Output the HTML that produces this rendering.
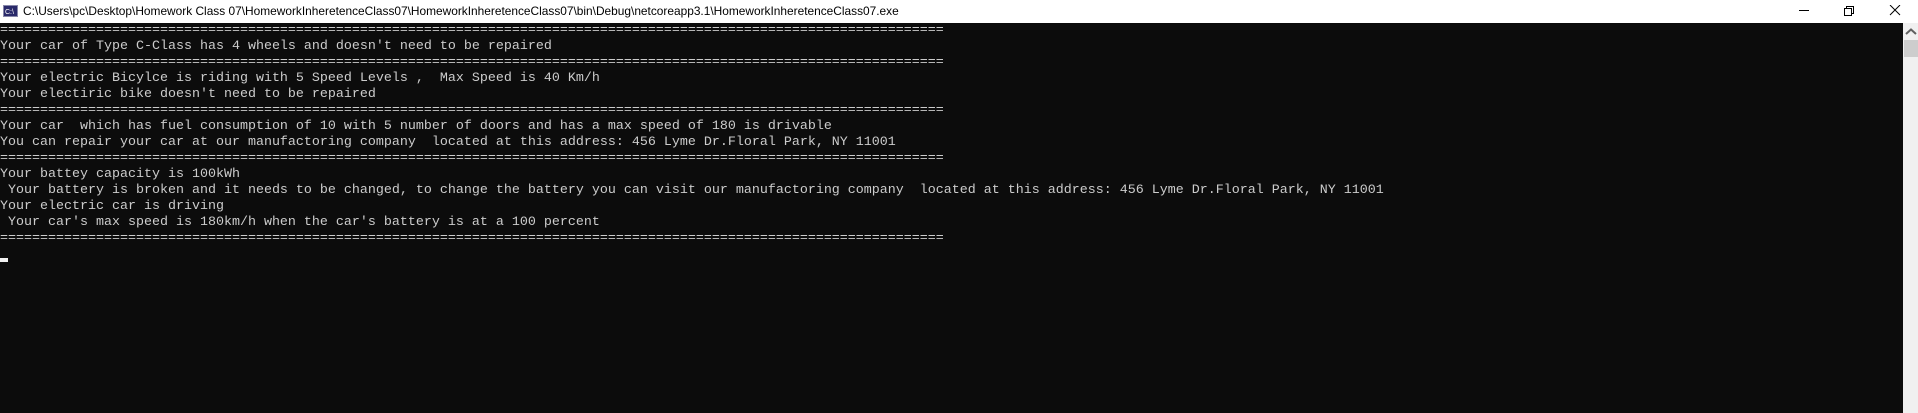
<!DOCTYPE html>
<html><head><style>
body{margin:0;width:1918px;height:413px;overflow:hidden;background:#0c0c0c;position:relative}
#tb{position:absolute;left:0;top:0;width:1918px;height:23px;background:#fff}
#title{position:absolute;left:23px;top:4px;font:11.9px "Liberation Sans",sans-serif;color:#000;white-space:nowrap}
#con{position:absolute;left:0;top:23px;margin:0;font:13.33px/16px "Liberation Mono",monospace;color:#cccccc;white-space:pre}
#sb{position:absolute;left:1903px;top:23px;width:15px;height:390px;background:#f0f0f0}
#th{position:absolute;left:1904px;top:40px;width:14px;height:17px;background:#cdcdcd}
#cur{position:absolute;left:0;top:258px;width:8px;height:4px;background:#f2f2f2}
</style></head><body>
<div id="tb">
<svg style="position:absolute;left:3px;top:5px" width="15" height="12"><rect x="0.5" y="0.5" width="14" height="11" fill="#2a2a6a" stroke="#8888aa"/><text x="2" y="9" font-size="7" fill="#fff" font-family="Liberation Sans">C:\</text></svg>
<div id="title">C:\Users\pc\Desktop\Homework Class 07\HomeworkInheretenceClass07\HomeworkInheretenceClass07\bin\Debug\netcoreapp3.1\HomeworkInheretenceClass07.exe</div>
<svg style="position:absolute;left:1795px;top:5px" width="120" height="14">
<line x1="4" y1="5.5" x2="14" y2="5.5" stroke="#000"/>
<rect x="49.5" y="3.5" width="7" height="7" fill="none" stroke="#000"/><path d="M51.5 3.5V1.5H58.5V8.5H56.5" fill="none" stroke="#000"/>
<path d="M95 0L105 10M105 0L95 10" stroke="#000"/>
</svg>
</div>
<pre id="con">======================================================================================================================
Your car of Type C-Class has 4 wheels and doesn't need to be repaired
======================================================================================================================
Your electric Bicylce is riding with 5 Speed Levels ,  Max Speed is 40 Km/h
Your electiric bike doesn't need to be repaired
======================================================================================================================
Your car  which has fuel consumption of 10 with 5 number of doors and has a max speed of 180 is drivable
You can repair your car at our manufactoring company  located at this address: 456 Lyme Dr.Floral Park, NY 11001
======================================================================================================================
Your battey capacity is 100kWh
 Your battery is broken and it needs to be changed, to change the battery you can visit our manufactoring company  located at this address: 456 Lyme Dr.Floral Park, NY 11001
Your electric car is driving
 Your car's max speed is 180km/h when the car's battery is at a 100 percent
======================================================================================================================</pre>
<div id="cur"></div>
<div id="sb"></div>
<svg style="position:absolute;left:1905px;top:28px" width="12" height="8"><path d="M1 6L6 1.5L11 6" fill="none" stroke="#606060" stroke-width="2"/></svg>
<div id="th"></div>
</body></html>
